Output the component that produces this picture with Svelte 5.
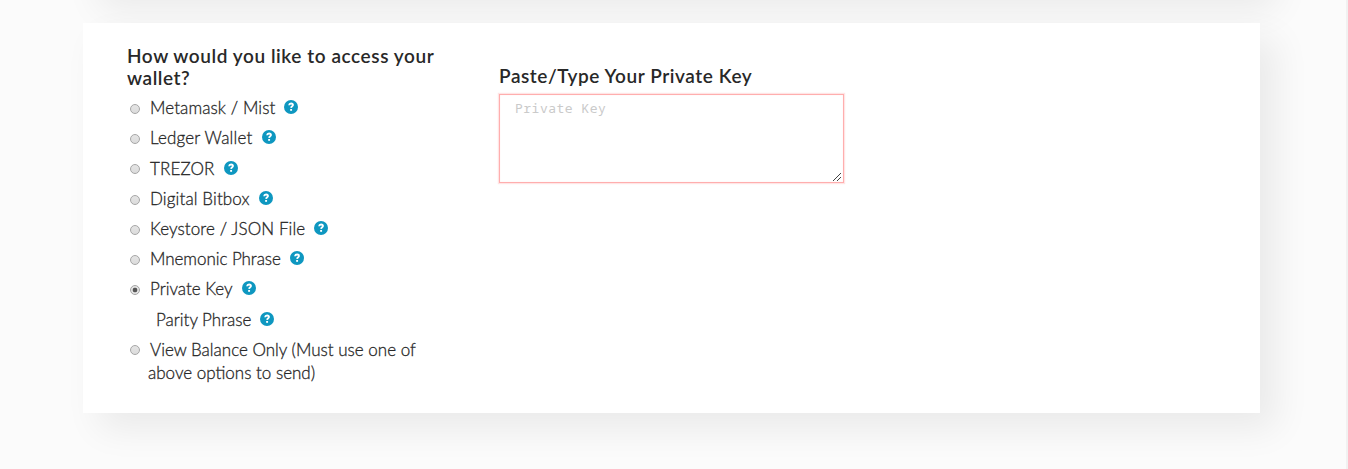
<script>
  const options = [
    { label: 'Metamask / Mist', help: true, tracking: 0.09 },
    { label: 'Ledger Wallet', help: true, tracking: 0.18 },
    { label: 'TREZOR', help: true, tracking: 0.14 },
    { label: 'Digital Bitbox', help: true, tracking: 0.12 },
    { label: 'Keystore / JSON File', help: true, tracking: 0.1 },
    { label: 'Mnemonic Phrase', help: true, tracking: -0.06 },
    { label: 'Private Key', help: true, tracking: 0 },
    { label: 'Parity Phrase', help: true, noRadio: true, tracking: 0 },
    { label: 'View Balance Only (Must use one of above options to send)', tracking: 0 }
  ];
  let selected = $state('Private Key');
</script>

<div class="page">
  <section class="card previous"></section>
  <section class="card main">
    <div class="choices">
      <h4>How would you like to access your wallet?</h4>
      {#each options as o}
        <label class="option" class:bare={o.noRadio}>
          {#if !o.noRadio}
            <input type="radio" name="wallet" value={o.label} bind:group={selected} />
          {/if}
          <span class="text" style:letter-spacing="{o.tracking}px">{o.label}</span>
          {#if o.help}
            <svg class="help" viewBox="0 0 14 14" aria-hidden="true">
              <circle cx="7" cy="7" r="7" fill="#0e97c0" />
              <path d="M5.05 5.25C5.2 3.95 6 3.5 7.05 3.5C8.2 3.5 9 4.1 9 5.1C9 6.3 7.2 6.3 7.1 7.85" fill="none" stroke="#fff" stroke-width="1.8" />
              <rect x="6.15" y="9" width="1.9" height="1.8" fill="#fff" />
            </svg>
          {/if}
        </label>
      {/each}
    </div>
    <div class="key">
      <h4>Paste/Type Your Private Key</h4>
      <div class="field">
        <textarea placeholder="Private Key" spellcheck="false"></textarea>
        <svg class="grip" viewBox="0 0 8 8" aria-hidden="true">
          <path d="M0 8L8 0M4 8L8 4" stroke="#444" stroke-width="1" />
        </svg>
      </div>
    </div>
  </section>
</div>

<style>
  :global(body) { background: #fbfbfb; }
  .page {
    box-sizing: border-box;
    height: 469px;
    padding: 0 86px 0 83px;
    border-right: 2px solid #f1f1f1;
    overflow: hidden;
    font-family: Lato, sans-serif;
    color: #282828;
  }
  .card {
    box-sizing: border-box;
    background: #fff;
    box-shadow: 16px 16px 34px 0 rgba(0, 0, 0, 0.07);
  }
  .previous { height: 200px; margin: -207px 0 30px; }
  .main {
    display: flex;
    height: 390px;
    padding: 22px 44px;
  }
  .choices { width: 327px; margin-right: 45px; }
  h4 {
    margin: 0;
    font-size: 19px;
    line-height: 22px;
    font-weight: 600;
    letter-spacing: 0.57px;
  }
  .choices h4 { margin-bottom: 7.2px; }
  .option {
    display: flex;
    align-items: flex-start;
    margin-bottom: 7.2px;
    font-size: 17px;
    line-height: 23px;
    font-weight: 300;
  }
  input {
    appearance: none;
    flex: none;
    box-sizing: border-box;
    width: 10px;
    height: 10px;
    margin: 7.8px 8px 0 3px;
    border: 1px solid #a6a6a6;
    border-radius: 50%;
    background: linear-gradient(#e4e4e4, #dcdcdc);
  }
  input:checked { background: radial-gradient(circle, #555 0 2px, #e4e4e4 2.7px); }
  .text { text-indent: 2px; -webkit-text-stroke: 0.3px #282828; }
  .bare { padding-left: 27px; }
  .help { flex: none; width: 14px; height: 14px; margin: 4px 0 0 9px; }
  .key { padding-top: 20px; }
  .field { position: relative; margin-top: 7px; }
  textarea {
    display: block;
    box-sizing: border-box;
    width: 345px;
    height: 89px;
    margin: 0;
    padding: 5px 15px;
    border: 1px solid #ffaeae;
    outline: none;
    background: #fff;
    box-shadow: inset 0 0 1px rgba(255, 120, 120, 0.3), 0 0 1px 1px rgba(255, 150, 150, 0.25);
    font: 13px/16px "Noto Sans Mono", "DejaVu Sans Mono", monospace;
    letter-spacing: 0.5px;
    resize: none;
  }
  textarea::placeholder { color: #cacaca; opacity: 1; }
  .grip { position: absolute; right: 3px; bottom: 2px; width: 8px; height: 8px; }
</style>
